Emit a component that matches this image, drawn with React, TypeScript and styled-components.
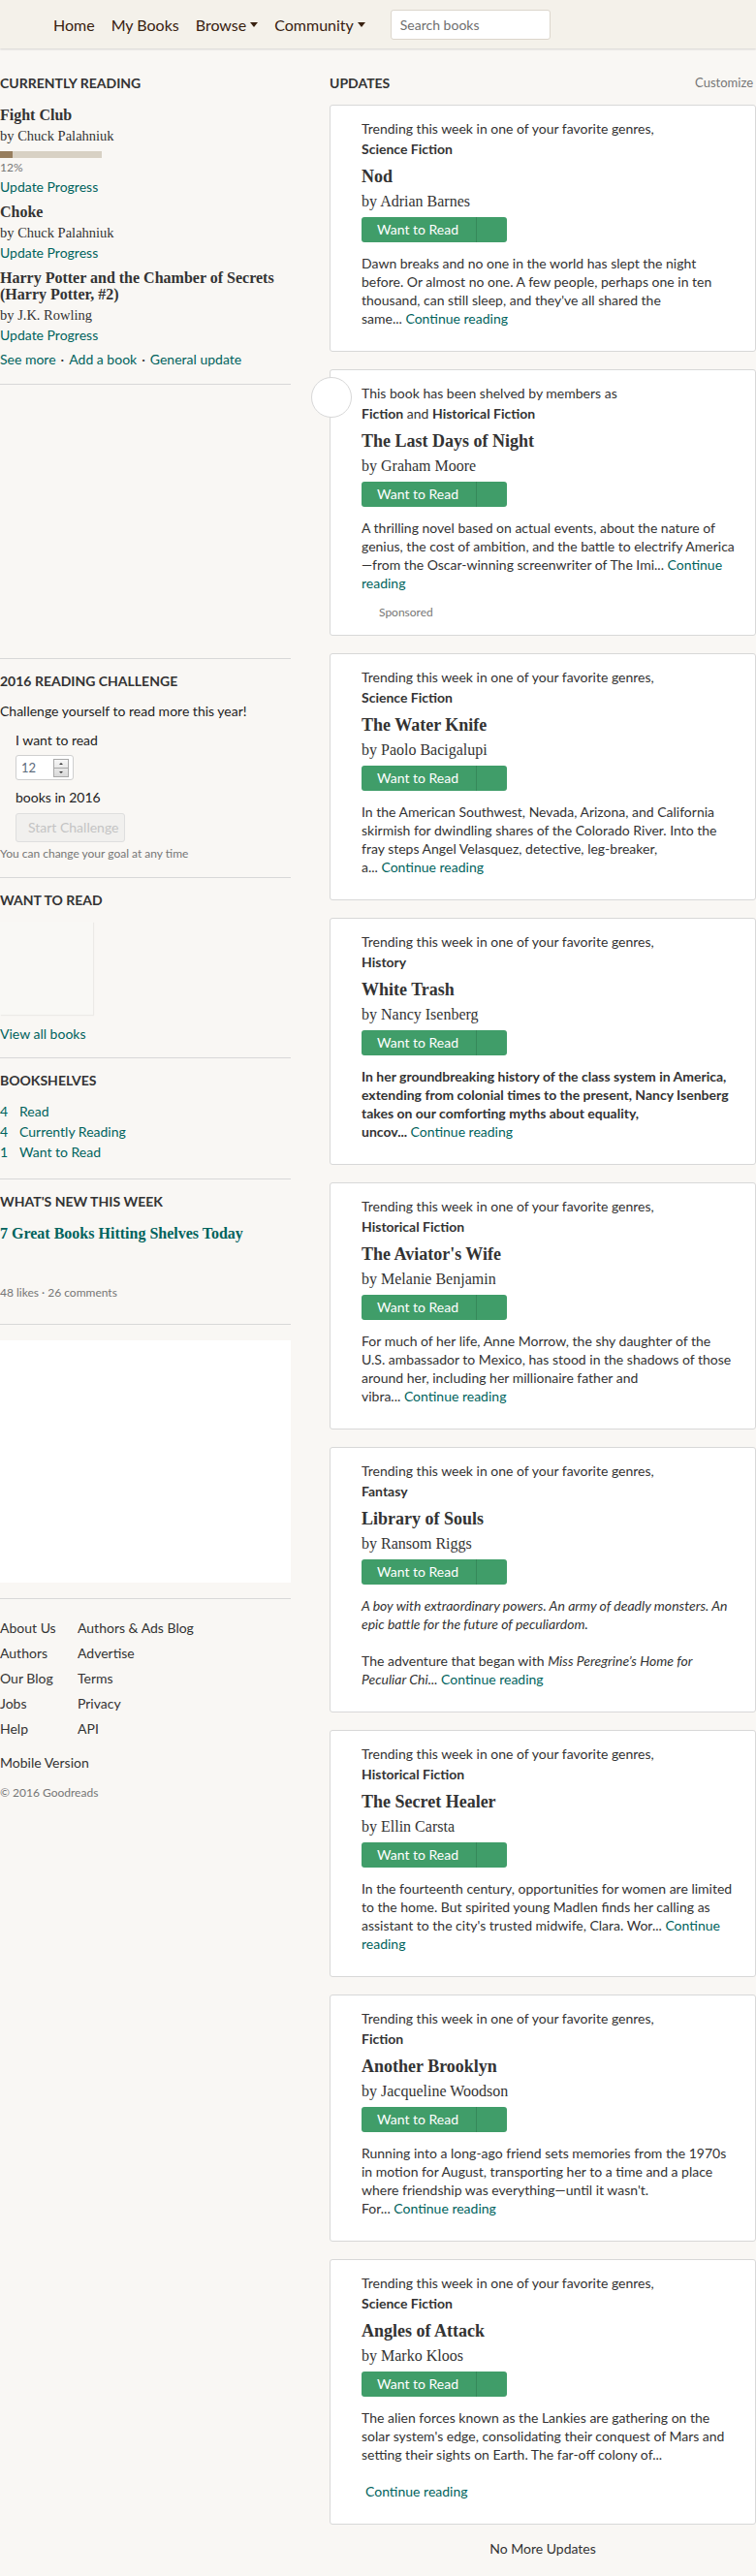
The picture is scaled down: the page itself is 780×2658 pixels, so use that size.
import React from 'react';
import styled, { createGlobalStyle } from 'styled-components';

const GlobalStyle = createGlobalStyle`
  html, body { margin: 0; padding: 0; background: #f9f7f4; }
  body {
    font-family: Lato, "Helvetica Neue", Arial, sans-serif;
    color: #333;
    font-size: 14px;
  }
  * { box-sizing: border-box; }
`;

const serif = `"Liberation Serif", "Times New Roman", serif`;
const teal = '#00635d';

/* ---------- header ---------- */
const Header = styled.header`
  height: 50px;
  background: #f4f1ea;
  box-shadow: 0 1px 2px rgba(0, 0, 0, 0.15);
  display: flex;
  align-items: center;
  padding-left: 55px;
`;
const Nav = styled.nav`
  display: flex;
  align-items: center;
  gap: 17px;
`;
const NavItem = styled.a`
  font-size: 16px;
  color: #382110;
  display: inline-flex;
  align-items: center;
  gap: 4px;
  text-decoration: none;
`;
const Caret = styled.span`
  width: 0;
  height: 0;
  border-left: 4px solid transparent;
  border-right: 4px solid transparent;
  border-top: 5px solid #382110;
`;
const SearchBox = styled.div`
  margin-left: 26px;
  width: 165px;
  height: 31px;
  background: #fff;
  border: 1px solid #dcd6cc;
  border-radius: 3px;
  display: flex;
  align-items: center;
  padding-left: 9px;
  font-size: 14px;
  color: #6f6f6f;
`;

/* ---------- layout ---------- */
const Main = styled.main`
  display: grid;
  grid-template-columns: 300px 440px;
  column-gap: 40px;
  align-items: start;
  padding: 26px 0 16px;
`;
const LeftCol = styled.aside`
  display: flex;
  flex-direction: column;
`;
const RightCol = styled.section`
  display: flex;
  flex-direction: column;
`;
const Section = styled.section<{ $divider?: boolean; $pb: number }>`
  border-top: ${(p) => (p.$divider ? '1px solid #d8d8d8' : 'none')};
  padding: ${(p) => (p.$divider ? '13px' : '0')} 0 ${(p) => p.$pb}px;
`;
const H2 = styled.h2`
  margin: 0;
  font-size: 14px;
  font-weight: 700;
  line-height: 20px;
  text-transform: uppercase;
  color: #333;
`;
const Link = styled.a`
  color: ${teal};
  text-decoration: none;
`;
const LinkLine = styled.div<{ $mt: number }>`
  margin-top: ${(p) => p.$mt}px;
  font-size: 14px;
  line-height: 20px;
`;
const Sep = styled.span`
  color: #333;
  margin: 0 5px;
`;

/* ---------- currently reading ---------- */
const BookList = styled.div`
  margin-top: 14px;
  display: flex;
  flex-direction: column;
  gap: 7px;
`;
const BookItem = styled.div`
  display: flex;
  flex-direction: column;
`;
const BookTitle = styled.div`
  font-family: ${serif};
  font-weight: 700;
  font-size: 16px;
  line-height: 17px;
  color: #333;
`;
const BookAuthor = styled.div`
  margin-top: 4px;
  font-family: ${serif};
  font-size: 14.5px;
  line-height: 18px;
  color: #333;
`;
const Progress = styled.div`
  margin-top: 7px;
  width: 105px;
  height: 7px;
  background: #d8d1c4;
`;
const ProgressFill = styled.div`
  height: 100%;
  background: #977e5e;
`;
const Small = styled.div<{ $mt: number }>`
  margin-top: ${(p) => p.$mt}px;
  font-size: 12px;
  line-height: 16px;
  color: #767676;
`;
const UpdateLink = styled(Link)`
  margin-top: 2px;
  font-size: 14px;
  line-height: 20px;
`;

/* ---------- ad slots ---------- */
const EmptySlot = styled.div<{ $h: number }>`
  border-top: 1px solid #d8d8d8;
  height: ${(p) => p.$h}px;
`;
const AdSection = styled.div`
  border-top: 1px solid #d8d8d8;
  padding: 16px 0;
`;
const WhiteAd = styled.div`
  height: 250px;
  background: #fff;
`;

/* ---------- challenge ---------- */
const Para = styled.div<{ $mt: number; $indent?: boolean }>`
  margin-top: ${(p) => p.$mt}px;
  margin-left: ${(p) => (p.$indent ? 16 : 0)}px;
  font-size: 14px;
  line-height: 20px;
  color: #222;
`;
const NumberBox = styled.div`
  margin: 5px 0 0 16px;
  width: 60px;
  height: 26px;
  border: 1px solid #cfcfcf;
  border-radius: 3px;
  background: #fff;
  display: flex;
  align-items: center;
  justify-content: space-between;
  padding: 0 4px 0 5px;
  font-size: 13px;
  color: #5d6b7c;
`;
const Spinner = styled.div`
  width: 16px;
  height: 19px;
  display: flex;
  flex-direction: column;
  border: 1px solid #a9a9a9;
  background: linear-gradient(#f7f7f7, #d9d9d9);
`;
const SpinHalf = styled.div<{ $down?: boolean }>`
  flex: 1;
  display: flex;
  align-items: center;
  justify-content: center;
  border-top: ${(p) => (p.$down ? '1px solid #a9a9a9' : 'none')};
  &::after {
    content: '';
    width: 0;
    height: 0;
    border-left: 2px solid transparent;
    border-right: 2px solid transparent;
    ${(p) => (p.$down ? 'border-top: 2px solid #333;' : 'border-bottom: 2px solid #333;')}
  }
`;
const DisabledButton = styled.div`
  margin: 6px 0 0 16px;
  width: 113px;
  height: 30px;
  border: 1px solid #dedede;
  border-radius: 3px;
  background: #f1f0ee;
  color: #c4c4c4;
  font-size: 14px;
  line-height: 28px;
  padding-left: 12px;
`;

/* ---------- want to read ---------- */
const CoverSlot = styled.div`
  margin-top: 12px;
  width: 96px;
  height: 96px;
  background: #f9f8f5;
  box-shadow: 1px 1px 1px rgba(0, 0, 0, 0.05);
`;

/* ---------- bookshelves ---------- */
const ShelfList = styled.div`
  margin-top: 11px;
  display: flex;
  flex-direction: column;
`;
const ShelfRow = styled.a`
  display: flex;
  font-size: 14px;
  line-height: 21px;
  color: ${teal};
  text-decoration: none;
`;
const ShelfCount = styled.span`
  width: 20px;
`;

/* ---------- what's new ---------- */
const ArticleTitle = styled(Link)`
  display: block;
  margin-top: 13px;
  font-family: ${serif};
  font-weight: 700;
  font-size: 16px;
  line-height: 20px;
`;

/* ---------- footer ---------- */
const Footer = styled.footer`
  border-top: 1px solid #d8d8d8;
  padding-top: 16px;
`;
const FooterGrid = styled.div`
  display: grid;
  grid-template-columns: 80px auto;
  grid-auto-rows: 26px;
  align-items: center;
`;
const FooterLink = styled.a`
  font-size: 14px;
  color: #333;
  text-decoration: none;
`;

/* ---------- updates ---------- */
const UpdatesHead = styled.div`
  display: flex;
  justify-content: space-between;
  align-items: flex-start;
`;
const Customize = styled.a`
  font-size: 13px;
  line-height: 16px;
  color: #767676;
  margin-top: 1px;
  margin-right: 3px;
`;
const CardList = styled.div`
  margin-top: 12px;
  display: flex;
  flex-direction: column;
  gap: 18px;
`;
const Card = styled.article`
  position: relative;
  background: #fff;
  border: 1px solid #d8d8d8;
  border-radius: 3px;
  padding: 13px 16px 24px 32px;
`;
const Avatar = styled.div`
  position: absolute;
  left: -20px;
  top: 7px;
  width: 42px;
  height: 42px;
  border-radius: 50%;
  background: #fff;
  border: 1px solid #d8d8d8;
`;
const Intro = styled.div`
  font-size: 14px;
  line-height: 21px;
  color: #333;
`;
const Genre = styled.div`
  font-weight: 700;
`;
const Bold = styled.b`
  font-weight: 700;
`;
const CardTitle = styled.h3`
  margin: 6px 0 0;
  font-family: ${serif};
  font-weight: 700;
  font-size: 18px;
  line-height: 24px;
  color: #333;
`;
const CardAuthor = styled.div`
  margin-top: 3px;
  font-family: ${serif};
  font-size: 16px;
  line-height: 22px;
  color: #333;
`;
const ButtonGroup = styled.div`
  margin-top: 5px;
  display: flex;
  width: 150px;
  height: 26px;
  border-radius: 3px;
  background: #409d69;
  overflow: hidden;
`;
const WantButton = styled.span`
  flex: 0 0 119px;
  border-right: 1px solid #36895a;
  padding-left: 16px;
  color: #fff;
  font-size: 14px;
  line-height: 26px;
`;
const DropButton = styled.span`
  flex: 1;
`;
const Desc = styled.div<{ $bold?: boolean }>`
  margin-top: 12px;
  font-size: 14px;
  line-height: 19px;
  color: #333;
  font-weight: ${(p) => (p.$bold ? 700 : 400)};
`;
const ContinueBlock = styled.div`
  margin-top: 19px;
  padding-left: 4px;
  font-size: 14px;
  line-height: 19px;
`;
const Sponsored = styled.div`
  margin: 11px 0 -11px 18px;
  font-size: 12px;
  line-height: 20px;
  color: #767676;
`;
const NoMore = styled.div`
  margin-top: 15px;
  text-align: center;
  font-size: 14px;
  line-height: 20px;
  color: #333;
`;
const RegularLink = styled(Link)`
  font-weight: 400;
`;

type Update = {
  intro: React.ReactNode;
  title: string;
  author: string;
  desc: React.ReactNode;
  bold?: boolean;
  sponsored?: boolean;
  after?: React.ReactNode;
};

const NB = '\u00a0';

const trending = (genre: string) => (
  <>
    Trending this week in one of your favorite genres,
    <Genre>{genre}</Genre>
  </>
);
const More = () => <RegularLink>Continue reading</RegularLink>;

const updates: Update[] = [
  {
    intro: trending('Science Fiction'),
    title: 'Nod',
    author: 'Adrian Barnes',
    desc: (
      <>
        Dawn breaks and no one in the world has slept the night before. Or almost no one. A few
        people, perhaps one in ten thousand, can still sleep, and they've all shared the same...{NB}
        <More />
      </>
    ),
  },
  {
    intro: (
      <>
        This book has been shelved by members as
        <div>
          <Bold>Fiction</Bold> and <Bold>Historical Fiction</Bold>
        </div>
      </>
    ),
    title: 'The Last Days of Night',
    author: 'Graham Moore',
    desc: (
      <>
        A thrilling novel based on actual events, about the nature of genius, the cost of ambition,
        and the battle to electrify America—from the Oscar-winning screenwriter of The Imi...{NB}
        <More />
      </>
    ),
    sponsored: true,
  },
  {
    intro: trending('Science Fiction'),
    title: 'The Water Knife',
    author: 'Paolo Bacigalupi',
    desc: (
      <>
        In the American Southwest, Nevada, Arizona, and California skirmish for dwindling shares of
        the Colorado River. Into the fray steps Angel Velasquez, detective, leg-breaker,
        <br />
        a...{NB}
        <More />
      </>
    ),
  },
  {
    intro: trending('History'),
    title: 'White Trash',
    author: 'Nancy Isenberg',
    bold: true,
    desc: (
      <>
        In her groundbreaking history of the class system in America, extending from colonial times
        to the present, Nancy Isenberg takes on our comforting myths about equality, uncov...{NB}
        <More />
      </>
    ),
  },
  {
    intro: trending('Historical Fiction'),
    title: "The Aviator's Wife",
    author: 'Melanie Benjamin',
    desc: (
      <>
        For much of her life, Anne Morrow, the shy daughter of the U.S.{NB}ambassador to Mexico,
        has stood in the shadows of those around her, including her millionaire father and
        <br />
        vibra...{NB}
        <More />
      </>
    ),
  },
  {
    intro: trending('Fantasy'),
    title: 'Library of Souls',
    author: 'Ransom Riggs',
    desc: (
      <>
        <i>
          A boy with extraordinary powers. An army of deadly monsters. An epic battle for the future
          of peculiardom.
        </i>
        <br />
        <br />
        The adventure that began with <i>Miss Peregrine’s Home for Peculiar Chi...</i>
        {NB}
        <More />
      </>
    ),
  },
  {
    intro: trending('Historical Fiction'),
    title: 'The Secret Healer',
    author: 'Ellin Carsta',
    desc: (
      <>
        In the fourteenth century, opportunities for women are limited to the home. But spirited
        young Madlen finds her calling as assistant to the city's trusted midwife, Clara. Wor...{NB}
        <More />
      </>
    ),
  },
  {
    intro: trending('Fiction'),
    title: 'Another Brooklyn',
    author: 'Jacqueline Woodson',
    desc: (
      <>
        Running into a long-ago friend sets memories from the 1970s in motion for August,
        transporting her to a time and a place where friendship was everything—until it wasn't.
        <br />
        For...{NB}
        <More />
      </>
    ),
  },
  {
    intro: trending('Science Fiction'),
    title: 'Angles of Attack',
    author: 'Marko Kloos',
    desc: (
      <>
        The alien forces known as the Lankies are gathering on the solar system's edge,
        consolidating their conquest of Mars and setting their sights on Earth. The far-off colony
        of...
      </>
    ),
    after: (
      <ContinueBlock>
        <More />
      </ContinueBlock>
    ),
  },
];

const reading = [
  { title: 'Fight Club', author: 'Chuck Palahniuk', progress: 12 },
  { title: 'Choke', author: 'Chuck Palahniuk' },
  { title: 'Harry Potter and the Chamber of Secrets (Harry Potter, #2)', author: 'J.K. Rowling' },
];

const footerLinks = [
  ['About Us', 'Authors & Ads Blog'],
  ['Authors', 'Advertise'],
  ['Our Blog', 'Terms'],
  ['Jobs', 'Privacy'],
  ['Help', 'API'],
];

export default function App() {
  return (
    <>
      <GlobalStyle />
      <Header>
        <Nav>
          <NavItem>Home</NavItem>
          <NavItem>My Books</NavItem>
          <NavItem>
            Browse <Caret />
          </NavItem>
          <NavItem>
            Community <Caret />
          </NavItem>
        </Nav>
        <SearchBox>Search books</SearchBox>
      </Header>

      <Main>
        <LeftCol>
          <Section $pb={15}>
            <H2>Currently Reading</H2>
            <BookList>
              {reading.map((b) => (
                <BookItem key={b.title}>
                  <BookTitle>{b.title}</BookTitle>
                  <BookAuthor>by {b.author}</BookAuthor>
                  {b.progress !== undefined && (
                    <>
                      <Progress>
                        <ProgressFill style={{ width: `${b.progress}%` }} />
                      </Progress>
                      <Small $mt={2}>{b.progress}%</Small>
                    </>
                  )}
                  <UpdateLink>Update Progress</UpdateLink>
                </BookItem>
              ))}
            </BookList>
            <LinkLine $mt={5}>
              <Link>See more</Link>
              <Sep>·</Sep>
              <Link>Add a book</Link>
              <Sep>·</Sep>
              <Link>General update</Link>
            </LinkLine>
          </Section>

          <EmptySlot $h={283} />

          <Section $divider $pb={16}>
            <H2>2016 Reading Challenge</H2>
            <Para $mt={11}>Challenge yourself to read more this year!</Para>
            <Para $mt={10} $indent>
              I want to read
            </Para>
            <NumberBox>
              12
              <Spinner>
                <SpinHalf />
                <SpinHalf $down />
              </Spinner>
            </NumberBox>
            <Para $mt={8} $indent>
              books in 2016
            </Para>
            <DisabledButton>Start Challenge</DisabledButton>
            <Small $mt={4}>You can change your goal at any time</Small>
          </Section>

          <Section $divider $pb={14}>
            <H2>Want to Read</H2>
            <CoverSlot />
            <LinkLine $mt={10}>
              <Link>View all books</Link>
            </LinkLine>
          </Section>

          <Section $divider $pb={17}>
            <H2>Bookshelves</H2>
            <ShelfList>
              {[
                ['4', 'Read'],
                ['4', 'Currently Reading'],
                ['1', 'Want to Read'],
              ].map(([n, label]) => (
                <ShelfRow key={label}>
                  <ShelfCount>{n}</ShelfCount>
                  {label}
                </ShelfRow>
              ))}
            </ShelfList>
          </Section>

          <Section $divider $pb={24}>
            <H2>What's New This Week</H2>
            <ArticleTitle>7 Great Books Hitting Shelves Today</ArticleTitle>
            <Small $mt={43}>48 likes · 26 comments</Small>
          </Section>

          <AdSection>
            <WhiteAd />
          </AdSection>

          <Footer>
            <FooterGrid>
              {footerLinks.flat().map((l) => (
                <FooterLink key={l}>{l}</FooterLink>
              ))}
            </FooterGrid>
            <Para $mt={13}>
              <FooterLink>Mobile Version</FooterLink>
            </Para>
            <Small $mt={13}>© 2016 Goodreads</Small>
          </Footer>
        </LeftCol>

        <RightCol>
          <UpdatesHead>
            <H2>Updates</H2>
            <Customize>Customize</Customize>
          </UpdatesHead>
          <CardList>
            {updates.map((u) => (
              <Card key={u.title}>
                {u.sponsored && <Avatar />}
                <Intro>{u.intro}</Intro>
                <CardTitle>{u.title}</CardTitle>
                <CardAuthor>by {u.author}</CardAuthor>
                <ButtonGroup>
                  <WantButton>Want to Read</WantButton>
                  <DropButton />
                </ButtonGroup>
                <Desc $bold={u.bold}>{u.desc}</Desc>
                {u.after}
                {u.sponsored && <Sponsored>Sponsored</Sponsored>}
              </Card>
            ))}
          </CardList>
          <NoMore>No More Updates</NoMore>
        </RightCol>
      </Main>
    </>
  );
}
